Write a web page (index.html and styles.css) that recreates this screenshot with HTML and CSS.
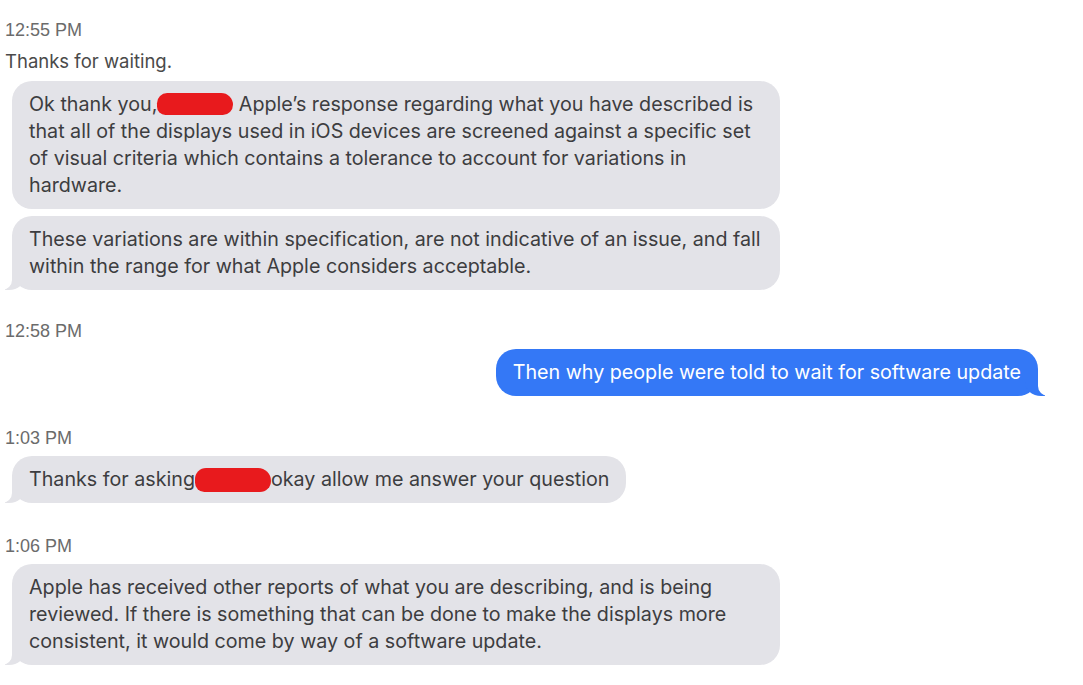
FILE: index.html
```html
<!DOCTYPE html>
<html>
<head>
<meta charset="utf-8">
<link rel="stylesheet" href="styles.css">
</head>
<body>
<div class="thread">
  <div class="time t1">12:55 PM</div>
  <div class="plain">Thanks for waiting.</div>
  <div class="row in">
    <div class="bubble grey">Ok thank you,<span class="redact r1"></span> Apple’s response regarding what you have described is that all of the displays used in iOS devices are screened against a specific set of visual criteria which contains a tolerance to account for variations in hardware.</div>
  </div>
  <div class="row in gap-sm">
    <div class="bubble grey tail">These variations are within specification, are not indicative of an issue, and fall within the range for what Apple considers acceptable.</div>
  </div>
  <div class="time t2">12:58 PM</div>
  <div class="row out">
    <div class="bubble blue tail-r">Then why people were told to wait for software update</div>
  </div>
  <div class="time t3">1:03 PM</div>
  <div class="row in">
    <div class="bubble grey tail">Thanks for asking<span class="redact r2"></span>okay allow me answer your question</div>
  </div>
  <div class="time t4">1:06 PM</div>
  <div class="row in">
    <div class="bubble grey tail">Apple has received other reports of what you are describing, and is being reviewed. If there is something that can be done to make the displays more consistent, it would come by way of a software update.</div>
  </div>
</div>
</body>
</html>
```

FILE: styles.css
```css
html, body {
  margin: 0;
  padding: 0;
  background: #ffffff;
}
body {
  font-family: Inter, "Noto Sans", sans-serif;
  color: #3d3d40;
}
.thread {
  width: 1083px;
  padding: 19px 0 0 0;
  display: flex;
  flex-direction: column;
}
.time {
  font-family: "Liberation Sans", Arial, sans-serif;
  font-size: 18px;
  color: #6b6b6b;
  padding-left: 5px;
  line-height: 22px;
}
.plain {
  font-size: 18.5px;
  line-height: 22px;
  padding-left: 5px;
  margin-top: 9px;
  color: #4a4a4a;
}
.row {
  display: flex;
  margin-top: 9px;
}
.row.gap-sm { margin-top: 7px; }
.row.in { justify-content: flex-start; padding-left: 12px; }
.row.out { justify-content: flex-end; padding-right: 45px; margin-top: 6px; }
.bubble {
  position: relative;
  max-width: 734px;
  padding: 10px 17px;
  border-radius: 20px;
  font-size: 19.7px;
  line-height: 27px;
}
.grey {
  background: #e3e3e8;
  color: #3d3d40;
}
.blue {
  background: #3478f6;
  color: #ffffff;
}
.t2 { margin-top: 30px; }
.t3 { margin-top: 31px; }
.t4 { margin-top: 32px; }
.time + .row { margin-top: 7px; }
.tail::before {
  content: "";
  position: absolute;
  left: -7px;
  bottom: 0;
  width: 20px;
  height: 20px;
  background: #e3e3e8;
  border-bottom-right-radius: 16px 14px;
}
.tail::after {
  content: "";
  position: absolute;
  left: -10px;
  bottom: 0;
  width: 10px;
  height: 20px;
  background: #ffffff;
  border-bottom-right-radius: 10px;
}
.tail-r::before {
  content: "";
  position: absolute;
  right: -7px;
  bottom: 0;
  width: 20px;
  height: 20px;
  background: #3478f6;
  border-bottom-left-radius: 16px 14px;
}
.tail-r::after {
  content: "";
  position: absolute;
  right: -10px;
  bottom: 0;
  width: 10px;
  height: 20px;
  background: #ffffff;
  border-bottom-left-radius: 10px;
}
.redact {
  display: inline-block;
  background: #e81a1d;
  border-radius: 12px 14px 12px 10px;
  vertical-align: middle;
  position: relative;
}
.r1 {
  width: 76px;
  height: 22px;
  top: -2px;
}
.r2 {
  width: 76px;
  height: 24px;
  top: -1px;
}
```
